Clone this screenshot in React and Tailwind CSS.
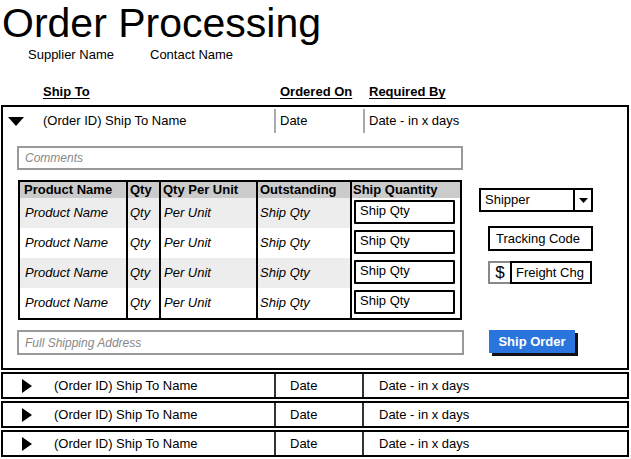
import React from 'react'

const rows = [1, 2, 3, 4]

function DownTri() {
  return (
    <svg width="16" height="9" viewBox="0 0 16 9">
      <polygon points="0,0 16,0 8,9" fill="#000" />
    </svg>
  )
}

function RightTri() {
  return (
    <svg width="10" height="14" viewBox="0 0 10 14">
      <polygon points="0,0 10,7 0,14" fill="#000" />
    </svg>
  )
}

function CollapsedRow() {
  return (
    <div className="flex h-[27px] w-[628px] items-center border-2 border-black text-[13px]">
      <div className="flex w-[51px] items-center pl-[19px]">
        <RightTri />
      </div>
      <div className="w-[220px]">(Order ID) Ship To Name</div>
      <div className="h-full w-[2px] bg-[#333]" />
      <div className="w-[86px] pl-[14px]">Date</div>
      <div className="h-full w-[2px] bg-[#333]" />
      <div className="pl-[15px]">Date - in x days</div>
    </div>
  )
}

export default function App() {
  return (
    <div className="h-[459px] w-[631px] overflow-hidden bg-white text-black" style={{ fontFamily: '"Liberation Sans", Arial, sans-serif' }}>
      <h1 className="pl-[2px] text-[41px] leading-[46px]">Order Processing</h1>
      <div className="flex h-[17px] items-center text-[13px]">
        <span className="ml-[28px]">Supplier Name</span>
        <span className="ml-[36px]">Contact Name</span>
      </div>
      <div className="mt-[21px] flex h-[16px] items-center text-[13px] font-bold underline underline-offset-2">
        <span className="ml-[43px] w-[237px]">Ship To</span>
        <span className="w-[89px]">Ordered On</span>
        <span>Required By</span>
      </div>

      <div className="ml-[1px] mt-[5px] h-[265px] w-[628px] border-2 border-black">
        <div className="flex h-[28px] items-center text-[13px]">
          <div className="flex w-[40px] items-center pl-[5px]">
            <DownTri />
          </div>
          <div className="w-[231px]">(Order ID) Ship To Name</div>
          <div className="h-[24px] w-[2px] bg-[#aaa]" />
          <div className="w-[87px] pl-[4px]">Date</div>
          <div className="h-[24px] w-[2px] bg-[#aaa]" />
          <div className="pl-[4px]">Date - in x days</div>
        </div>

        <div className="mt-[11px] flex pl-[14px]">
          <div className="w-[446px]">
            <div className="flex h-[24px] items-center border-2 border-[#999] pl-[6px] text-[12px] italic text-[#888]">Comments</div>

            <div className="ml-[1px] mt-[10px] w-[444px] border-2 border-black">
              <div className="flex h-[16px] bg-[#cbcbcb] text-[13px] font-bold leading-[16px]">
                <div className="w-[106px] pl-[4px]">Product Name</div>
                <div className="w-[2px] bg-black" />
                <div className="w-[31px] pl-[2px]">Qty</div>
                <div className="w-[2px] bg-black" />
                <div className="w-[95px] pl-[2px]">Qty Per Unit</div>
                <div className="w-[2px] bg-black" />
                <div className="w-[92px] pl-[2px]">Outstanding</div>
                <div className="w-[2px] bg-black" />
                <div className="w-[108px] pl-[1px]">Ship Quantity</div>
              </div>
              {rows.map((r) => (
                <div key={r} className={`flex h-[30px] text-[13px] ${r % 2 ? 'bg-[#ededed]' : 'bg-white'}`}>
                  <div className="flex w-[106px] items-center pl-[5px] italic">Product Name</div>
                  <div className="w-[2px] bg-black" />
                  <div className="flex w-[31px] items-center pl-[2px] italic">Qty</div>
                  <div className="w-[2px] bg-black" />
                  <div className="flex w-[95px] items-center pl-[3px] italic">Per Unit</div>
                  <div className="w-[2px] bg-black" />
                  <div className="flex w-[92px] items-center pl-[2px] italic">Ship Qty</div>
                  <div className="w-[2px] bg-black" />
                  <div className="w-[108px] bg-white pl-[2px] pt-[2px]">
                    <div className="h-[24px] w-[101px] rounded-[1px] border-[2.5px] border-black pl-[4px] leading-[17px]">Ship Qty</div>
                  </div>
                </div>
              ))}
            </div>

            <div className="mt-[10px] flex h-[25px] w-[447px] items-center border-2 border-[#999] pl-[6px] text-[12px] italic text-[#888]">Full Shipping Address</div>
          </div>

          <div className="ml-[16px] mt-[42px] flex flex-col text-[13px]">
            <div className="flex h-[24px] w-[114px] border-2 border-black">
              <div className="flex flex-1 items-center pl-[4px]">Shipper</div>
              <div className="w-[2px] bg-black" />
              <div className="flex w-[16px] items-center justify-center">
                <svg width="9" height="5" viewBox="0 0 9 5">
                  <polygon points="0,0 9,0 4.5,5" fill="#000" />
                </svg>
              </div>
            </div>
            <div className="ml-[9px] mt-[14px] flex h-[25px] w-[105px] items-center border-[2.5px] border-black pl-[6px]">Tracking Code</div>
            <div className="ml-[9px] mt-[10px] flex h-[23px]">
              <div className="flex w-[22px] items-center justify-center border-2 border-r-0 border-[#888] text-[17px]">$</div>
              <div className="flex w-[82px] items-center border-[2.5px] border-black pl-[4px]">Freight Chg</div>
            </div>
            <button className="ml-[10px] mt-[46px] h-[23px] w-[86px] bg-[#2a74de] text-[13px] font-bold text-white shadow-[3px_3px_0_#111]">Ship Order</button>
          </div>
        </div>
      </div>

      <div className="ml-[1px] mt-[2px] flex flex-col gap-[2px]">
        <CollapsedRow />
        <CollapsedRow />
        <CollapsedRow />
      </div>
    </div>
  )
}
